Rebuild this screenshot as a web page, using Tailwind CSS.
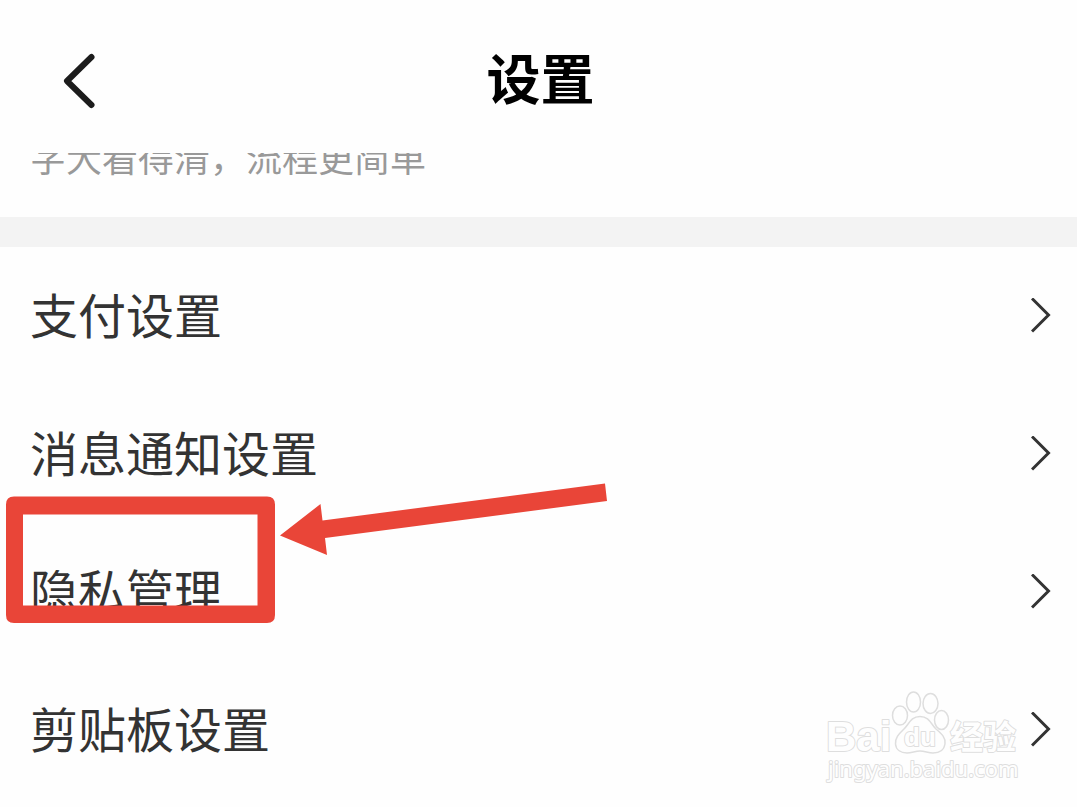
<!DOCTYPE html>
<html lang="zh-CN">
<head>
<meta charset="utf-8">
<meta name="viewport" content="width=device-width, initial-scale=1">
<title>设置</title>
<script src="https://cdn.jsdelivr.net/npm/@tailwindcss/browser@4"></script>
</head>
<body class="bg-[#fefefe] font-['Noto_Sans_CJK_SC',sans-serif] text-[#333333]">
<div class="relative min-h-screen overflow-hidden">
  <header class="grid h-[153px] grid-cols-[1fr_auto_1fr] items-center pr-[56px] pl-[60px] pb-2">
    <button type="button" aria-label="返回" class="flex w-10 justify-start pt-4">
      <svg class="h-[60px] w-10" viewBox="0 0 40 60" fill="none" stroke="#1c1c1c" stroke-width="6" stroke-linecap="round" stroke-linejoin="round"><path d="M31.500 6 7 30 31.500 54"/></svg>
    </button>
    <h1 class="pt-2 text-[54px] leading-[72px] font-bold text-black">设置</h1>
  </header>
  <main>
    <section class="flex h-16 items-start overflow-hidden px-[30px]">
      <p class="-mt-6 text-[36px] leading-[54px] whitespace-nowrap text-[#999999]">字大看得清，流程更简单</p>
    </section>
    <div class="h-[30px] bg-[#f3f3f3]"></div>
    <nav aria-label="设置">
      <a href="#payment" class="flex h-[138px] items-center justify-between pr-[26px] pl-[30px] text-[48px] leading-[72px]">
        <span class="pb-1.5">支付设置</span>
        <svg class="h-9 w-5" viewBox="0 0 20 36" fill="none" stroke="#333" stroke-width="3"><path d="M1 0.500 17.500 17 1 33.500"/></svg>
      </a>
      <a href="#notice" class="flex h-[138px] items-center justify-between pr-[26px] pl-[30px] text-[48px] leading-[72px]">
        <span class="pb-1.5">消息通知设置</span>
        <svg class="h-9 w-5" viewBox="0 0 20 36" fill="none" stroke="#333" stroke-width="3"><path d="M1 0.500 17.500 17 1 33.500"/></svg>
      </a>
      <a href="#privacy" class="flex h-[138px] items-center justify-between pr-[26px] pl-[30px] text-[48px] leading-[72px]">
        <span class="pb-1.5">隐私管理</span>
        <svg class="h-9 w-5" viewBox="0 0 20 36" fill="none" stroke="#333" stroke-width="3"><path d="M1 0.500 17.500 17 1 33.500"/></svg>
      </a>
      <a href="#clipboard" class="flex h-[138px] items-center justify-between pr-[26px] pl-[30px] text-[48px] leading-[72px]">
        <span class="pb-1.5">剪贴板设置</span>
        <svg class="h-9 w-5" viewBox="0 0 20 36" fill="none" stroke="#333" stroke-width="3"><path d="M1 0.500 17.500 17 1 33.500"/></svg>
      </a>
    </nav>
  </main>

  <!-- Highlight frame and arrow over the privacy row -->
  <svg class="pointer-events-none absolute top-[480px] left-0 h-[150px] w-[620px]" viewBox="0 480 620 150" fill="#e94538" aria-hidden="true">
    <path fill-rule="evenodd" d="M14 496.500H267Q275 496.500 275 504.500V615Q275 623 267 623H14Q6 623 6 615V504.500Q6 496.500 14 496.500ZM23 514.500V605.500H257.500V514.500Z"/>
    <path d="M280 535.500 320.500 504 322.500 520.500 605 483.500 607 501 325 538 327 555Z"/>
  </svg>

  <!-- Watermark -->
  <svg class="pointer-events-none absolute top-[680px] right-[47px] h-[110px] w-[220px]" viewBox="0 0 220 110" fill="#fefefe" stroke="#dedede" stroke-width="1.500" stroke-linejoin="round">
    <text x="16" y="71" font-size="42" font-weight="700" font-family="Liberation Sans, sans-serif" stroke-width="2" paint-order="stroke">Bai</text>
    <ellipse cx="90" cy="35.500" rx="7.500" ry="9.500"/>
    <ellipse cx="103.500" cy="22" rx="7" ry="10"/>
    <ellipse cx="120.500" cy="23.500" rx="7.500" ry="10"/>
    <ellipse cx="131.500" cy="40" rx="7" ry="9.500"/>
    <path d="M110 36.500C119 36.500 121 44 126 49C132 54 136 58 135 64C134 71 129 73 123 73C118 73 115 71 110 71C105 71 102 73 97 73C91 73 86 70 85.500 64C85 57 90 53 94 49C99 44 101 36.500 110 36.500Z"/>
    <text x="94" y="66" font-size="26" font-weight="700" font-family="Liberation Sans, sans-serif" stroke-width="2" paint-order="stroke">du</text>
    <text x="140" y="69" font-size="33" font-weight="700" font-family="Noto Sans CJK SC, sans-serif" stroke-width="2" paint-order="stroke">经验</text>
    <text x="18" y="97" font-size="22" font-family="Noto Sans, sans-serif" stroke-width="2" paint-order="stroke">jingyan.baidu.com</text>
  </svg>
</div>
</body>
</html>
